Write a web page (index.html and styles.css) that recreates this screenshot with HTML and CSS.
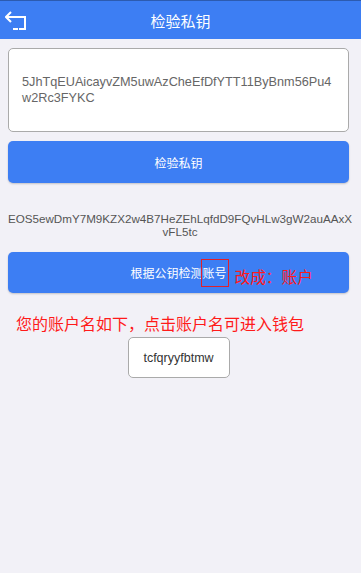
FILE: index.html
```html
<!DOCTYPE html>
<html lang="zh-CN">
<head>
    <meta charset="UTF-8">
    <title>检验私钥</title>
    <link rel="stylesheet" href="styles.css">
</head>
<body>
<div class="header">
    <a class="back" href="#">
        <svg width="24" height="20" viewBox="0 0 24 20">
            <path d="M1 6 H20 V18" fill="none" stroke="#fff" stroke-width="2"/>
            <path d="M6 1 L1 6 L6 11" fill="none" stroke="#fff" stroke-width="2"/>
            <path d="M8 18 H13 M14 18 H21" fill="none" stroke="#fff" stroke-width="2"/>
        </svg>
    </a>
    <span class="title">检验私钥</span>
</div>

<div class="content">
    <div class="key-box">5JhTqEUAicayvZM5uwAzCheEfDfYTT11ByBnm56Pu4w2Rc3FYKC</div>
    <button class="btn">检验私钥</button>

    <div class="pubkey">EOS5ewDmY7M9KZX2w4B7HeZEhLqfdD9FQvHLw3gW2auAAxXvFL5tc</div>

    <button class="btn btn-check">根据公钥检测<span class="mark">账号<span class="note">改成：账户</span></span></button>

    <div class="tip">您的账户名如下，点击账户名可进入钱包</div>
    <div class="accounts">
        <a class="account" href="#">tcfqryyfbtmw</a>
    </div>
</div>
</body>
</html>
```

FILE: styles.css
```css
body {
    margin: 0;
    padding: 0;
    background: #f2f1f7;
    font-family: "Liberation Sans", "Noto Sans CJK SC", sans-serif;
}

.header {
    height: 38px;
    border-top: 1px solid #2c5bb0;
    background: #3d7ef3;
    display: flex;
    align-items: center;
    justify-content: center;
    position: relative;
}

.back {
    position: absolute;
    left: 5px;
    top: 10px;
    display: block;
    line-height: 0;
}

.title {
    color: #fff;
    font-size: 15px;
}

.content {
    padding: 9px 12px 0 8px;
}

.key-box {
    height: 82px;
    padding: 0 13px;
    border: 1px solid #aaa;
    border-radius: 5px;
    background: #fff;
    color: #666;
    font-size: 12.7px;
    line-height: 16px;
    display: flex;
    align-items: center;
    word-break: break-all;
}

.btn {
    display: block;
    width: 100%;
    height: 42px;
    margin-top: 9px;
    border: none;
    border-radius: 5px;
    background: #3d7ef3;
    box-shadow: 0 1px 2px rgba(0, 0, 0, 0.2);
    color: #fff;
    font-family: inherit;
    font-size: 12px;
    padding: 0;
}

.pubkey {
    margin: 29px -4px 0 -1px;
    color: #555;
    font-size: 11.65px;
    line-height: 13px;
    text-align: center;
    word-break: break-all;
}

.btn-check {
    margin-top: 14px;
    height: 41px;
}

.mark {
    position: relative;
}

.mark::before {
    content: "";
    position: absolute;
    left: -2px;
    right: -2px;
    top: -8px;
    bottom: -6px;
    border: 1px solid #e0202a;
}

.note {
    position: absolute;
    left: 32px;
    top: -2px;
    color: #ff1a1a;
    font-size: 15.7px;
    white-space: nowrap;
}

.tip {
    margin-top: 23px;
    padding-left: 8px;
    color: #ff1a1a;
    font-size: 16px;
    line-height: 18px;
}

.accounts {
    display: flex;
    justify-content: center;
    margin-top: 3px;
}

.account {
    width: 100px;
    height: 39px;
    border: 1px solid #aaa;
    border-radius: 5px;
    background: #fff;
    color: #333;
    font-size: 12.5px;
    text-decoration: none;
    display: flex;
    align-items: center;
    justify-content: center;
}
```
